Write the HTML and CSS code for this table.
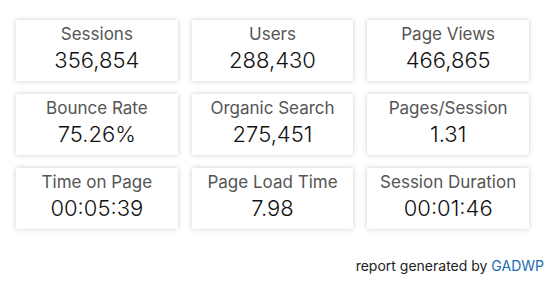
FILE: index.html
```html
<!DOCTYPE html>
<html>
<head>
<meta charset="utf-8">
<link rel="stylesheet" href="styles.css">
</head>
<body>
<div class="report">
  <div class="grid">
    <div class="card"><div class="label">Sessions</div><div class="value">356,854</div></div>
    <div class="card"><div class="label">Users</div><div class="value">288,430</div></div>
    <div class="card"><div class="label">Page Views</div><div class="value">466,865</div></div>
    <div class="card"><div class="label">Bounce Rate</div><div class="value">75.26%</div></div>
    <div class="card"><div class="label">Organic Search</div><div class="value">275,451</div></div>
    <div class="card"><div class="label">Pages/Session</div><div class="value">1.31</div></div>
    <div class="card"><div class="label">Time on Page</div><div class="value">00:05:39</div></div>
    <div class="card"><div class="label">Page Load Time</div><div class="value">7.98</div></div>
    <div class="card"><div class="label">Session Duration</div><div class="value">00:01:46</div></div>
  </div>
  <div class="footer">report generated by <a href="#" class="brand">GADWP</a></div>
</div>
</body>
</html>
```

FILE: styles.css
```css
html, body {
  margin: 0;
  padding: 0;
  background: #fff;
}
.report {
  width: 550px;
  padding: 20px 0 0 16px;
  box-sizing: border-box;
  font-family: Inter, "Liberation Sans", sans-serif;
}
.grid {
  width: 513px;
  display: grid;
  grid-template-columns: repeat(3, 1fr);
  column-gap: 14px;
  row-gap: 13px;
}
.card {
  height: 61px;
  background: #fff;
  box-shadow: 0 0 5px rgba(0, 0, 0, 0.2);
  text-align: center;
  display: flex;
  flex-direction: column;
  align-items: center;
  padding-top: 3px;
  box-sizing: border-box;
}
.label {
  font-size: 17px;
  line-height: 22px;
  color: #555;
}
.value {
  font-size: 22px;
  line-height: 30px;
  color: #111;
  font-weight: 300;
}
.footer {
  margin-top: 28px;
  width: 528px;
  text-align: right;
  font-size: 14px;
  color: #222;
}
.brand {
  color: #1a6db0;
  text-decoration: none;
}
```
